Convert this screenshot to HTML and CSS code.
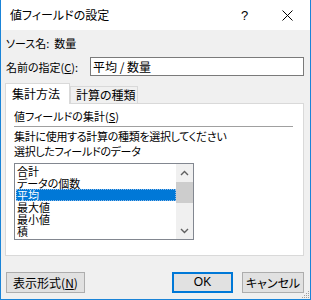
FILE: index.html
```html
<!DOCTYPE html>
<html lang="ja">
<head>
<meta charset="utf-8">
<title>値フィールドの設定</title>
<link rel="stylesheet" href="styles.css">
</head>
<body>
<div class="window">
  <div class="titlebar">
    <span class="title">値フィールドの設定</span>
    <span class="help">?</span>
    <span class="close"><svg width="11" height="11" viewBox="0 0 11 11"><path d="M0.5 0.5L10.5 10.5M10.5 0.5L0.5 10.5" stroke="#000" stroke-width="1" fill="none"/></svg></span>
  </div>
  <div class="body">
    <div class="row source">ソース名:&nbsp; 数量</div>
    <div class="row namerow">
      <span class="label">名前の指定(<u>C</u>):</span>
      <div class="input">平均 / 数量</div>
    </div>
    <div class="tabs">
      <div class="tab active">集計方法</div>
      <div class="tab">計算の種類</div>
    </div>
    <div class="panel">
      <div class="heading">値フィールドの集計(<u>S</u>)</div>
      <div class="sep"></div>
      <div class="desc">集計に使用する計算の種類を選択してください</div>
      <div class="desc">選択したフィールドのデータ</div>
      <div class="listbox">
        <ul class="items">
          <li>合計</li>
          <li>データの個数</li>
          <li class="selected">平均</li>
          <li>最大値</li>
          <li>最小値</li>
          <li>積</li>
        </ul>
        <div class="scrollbar">
          <div class="arrow"><svg width="9" height="6" viewBox="0 0 9 6"><path d="M1 5L4.5 1.5L8 5" stroke="#606060" stroke-width="1.4" fill="none"/></svg></div>
          <div class="thumb"></div>
          <div class="spacer"></div>
          <div class="arrow"><svg width="9" height="6" viewBox="0 0 9 6"><path d="M1 1L4.5 4.5L8 1" stroke="#606060" stroke-width="1.4" fill="none"/></svg></div>
        </div>
      </div>
    </div>
    <div class="buttons">
      <div class="btn fmt">表示形式(<u>N</u>)</div>
      <div class="btn ok">OK</div>
      <div class="btn cancel">キャンセル</div>
    </div>
  </div>
  <svg class="grip" width="10" height="10" viewBox="0 0 10 10">
    <rect x="8" y="2" width="1" height="1" fill="#a0a0a0"/>
    <rect x="6" y="4" width="1" height="1" fill="#a0a0a0"/>
    <rect x="8" y="4" width="1" height="1" fill="#a0a0a0"/>
    <rect x="4" y="6" width="1" height="1" fill="#a0a0a0"/>
    <rect x="6" y="6" width="1" height="1" fill="#a0a0a0"/>
    <rect x="8" y="6" width="1" height="1" fill="#a0a0a0"/>
    <rect x="2" y="8" width="1" height="1" fill="#a0a0a0"/>
    <rect x="4" y="8" width="1" height="1" fill="#a0a0a0"/>
    <rect x="6" y="8" width="1" height="1" fill="#a0a0a0"/>
    <rect x="8" y="8" width="1" height="1" fill="#a0a0a0"/>
  </svg>
</div>
</body>
</html>
```
FILE: styles.css
```css
* { box-sizing: border-box; }
html, body { margin: 0; padding: 0; }
body {
  width: 311px;
  height: 300px;
  overflow: hidden;
  font-family: "Noto Sans CJK JP", "Noto Sans", sans-serif;
  font-feature-settings: "palt";
  font-size: 11px;
  color: #000;
  background: #f0f0f0;
}
.window {
  position: relative;
  width: 311px;
  height: 300px;
  border-left: 1px solid #1a84d8;
  border-right: 1px solid #1a84d8;
  border-bottom: 1px solid #1a84d8;
  background: #f0f0f0;
  display: flex;
  flex-direction: column;
}
.titlebar {
  height: 30px;
  background: #fff;
  display: flex;
  align-items: center;
  padding-left: 9px;
  flex: none;
}
.title {
  font-size: 12px;
  line-height: 14px;
  flex: 1;
}
.help {
  font-family: "Liberation Sans", sans-serif;
  font-size: 13px;
  width: 12px;
  margin-right: 29px;
}
.close {
  width: 11px;
  height: 11px;
  margin-right: 17px;
  display: flex;
}
.body {
  flex: 1;
  padding: 6px 6px 0 4px;
  display: flex;
  flex-direction: column;
}
.row { line-height: 14px; white-space: nowrap; }
.source { padding-left: 1px; }
.namerow {
  display: flex;
  align-items: center;
  margin-top: 7px;
  height: 19px;
}
.label { padding-left: 1px; width: 85px; flex: none; }
.input {
  flex: 1;
  height: 19px;
  background: #fff;
  border: 1px solid #7a7a7a;
  padding-left: 2px;
  font-size: 12px;
  line-height: 17px;
}
.tabs {
  display: flex;
  align-items: flex-end;
  margin-top: 7px;
  height: 20px;
}
.tab {
  height: 17px;
  border: 1px solid #d9d9d9;
  border-bottom: none;
  background: #f0f0f0;
  padding: 0 0 0 5px;
  line-height: 16px;
  font-size: 12px;
  width: 68px;
  white-space: nowrap;
  overflow: hidden;
}
.tab.active {
  position: relative;
  z-index: 1;
  height: 21px;
  margin-bottom: -1px;
  background: #fff;
  width: 65px;
  padding-left: 6px;
  line-height: 20px;
}
.panel {
  height: 153px;
  background: #fff;
  border: 1px solid #d9d9d9;
  padding: 5px 10px 0 8px;
}
.heading { line-height: 14px; white-space: nowrap; }
.sep {
  height: 1px;
  background: #a0a0a0;
  margin: 3px 0 2px 0;
}
.desc { line-height: 15px; white-space: nowrap; letter-spacing: -0.3px; }
.listbox {
  margin-top: 4px;
  width: 180px;
  height: 77px;
  border: 1px solid #828790;
  background: #fff;
  display: flex;
}
.items {
  list-style: none;
  margin: 0;
  padding: 1px 0 0 1px;
  flex: 1;
  font-size: 11px;
}
.items li {
  height: 12px;
  line-height: 12px;
  padding-left: 1px;
  white-space: nowrap;
}
.items li.selected {
  background: #0078d7;
  color: #fff;
  outline: 1px dotted #8fb9e6;
  outline-offset: -1px;
}
.scrollbar {
  width: 17px;
  background: #f0f0f0;
  display: flex;
  flex-direction: column;
}
.arrow {
  height: 17px;
  display: flex;
  align-items: center;
  justify-content: center;
}
.thumb {
  height: 21px;
  margin-top: 1px;
  background: #cdcdcd;
}
.spacer { flex: 1; }
.buttons {
  display: flex;
  margin-top: 16px;
  gap: 9px;
}
.btn {
  height: 21px;
  background: #e1e1e1;
  border: 1px solid #adadad;
  text-align: center;
  line-height: 19px;
  font-size: 12px;
  white-space: nowrap;
}
.fmt { width: 79px; margin-left: 1px; }
.ok {
  width: 61px;
  margin-left: auto;
  border: 2px solid #0078d7;
  line-height: 17px;
  font-family: "Liberation Sans", sans-serif;
}
.cancel { width: 62px; }
.grip {
  position: absolute;
  right: 0;
  bottom: 0;
}
```
